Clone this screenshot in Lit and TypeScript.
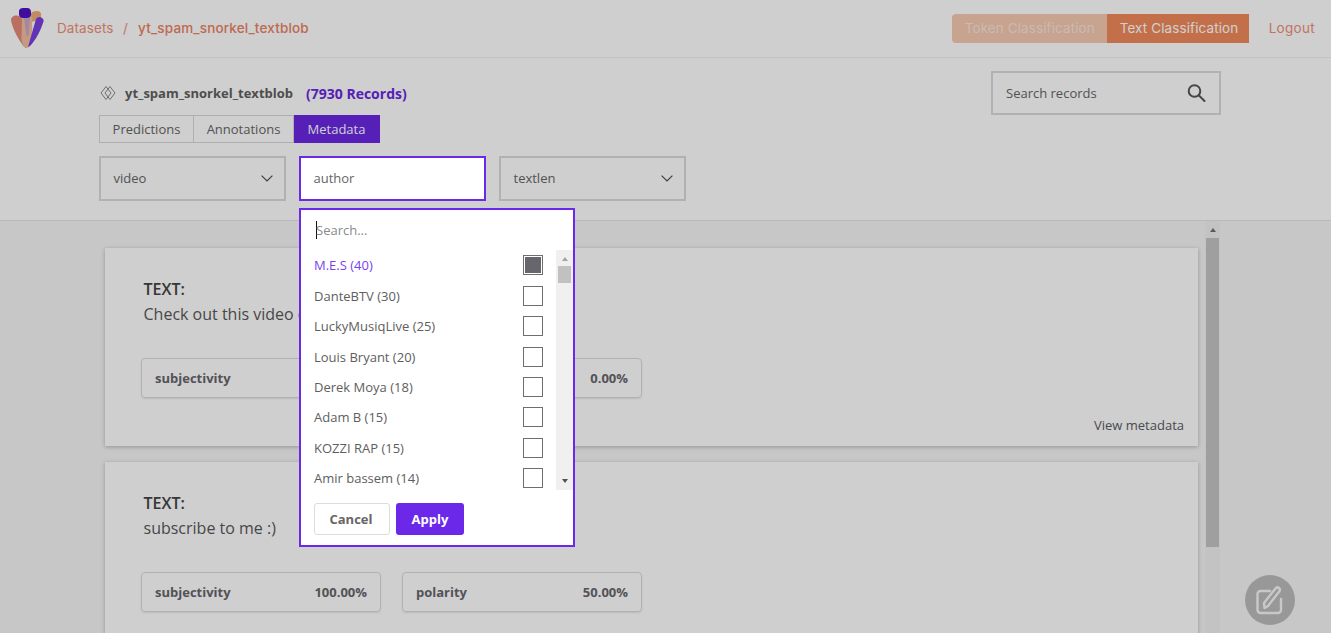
import { LitElement, html, css } from 'lit';
import { customElement } from 'lit/decorators.js';

const AUTHORS = [
	'M.E.S (40)',
	'DanteBTV (30)',
	'LuckyMusiqLive (25)',
	'Louis Bryant (20)',
	'Derek Moya (18)',
	'Adam B (15)',
	'KOZZI RAP (15)',
	'Amir bassem (14)',
];

const chevron = html`<svg class="chevron" width="12" height="7" viewBox="0 0 12 7" fill="none" stroke="#4d4d4d" stroke-width="1.2"><path d="M.6.6L6 6l5.400-5.400"/></svg>`;

@customElement('app-root')
export class AppRoot extends LitElement {
	static styles = css`
		* {
			box-sizing: border-box;
		}

		:host {
			display: block;
			position: relative;
			height: 633px;
			overflow: hidden;
			background: #fff;
			color: #666;
			font-family: "Open Sans", sans-serif;
			font-size: 13px;
		}

		.scrim {
			position: absolute;
			inset: 0;
			z-index: 10;
			background: rgba(0, 0, 0, 0.19);
		}

		.topbar {
			display: flex;
			align-items: center;
			height: 58px;
			padding: 0 16px 1px 11px;
			border-bottom: 1px solid #f0f0f0;
			font-family: Inter, sans-serif;
			font-size: 13.5px;
			letter-spacing: 0.1px;
			color: #ee8f76;
		}

		.logo {
			display: block;
			margin-right: 13px;
		}

		.crumb-sep {
			margin: 0 10px 0 9.5px;
		}

		.crumb-current {
			font-weight: 500;
			letter-spacing: 0.15px;
			color: #ea8263;
		}

		.switch {
			display: flex;
			margin-left: auto;
			height: 29px;
		}

		.switch div {
			display: flex;
			align-items: center;
			padding: 0 13px;
			white-space: nowrap;
			color: #fff;
		}

		.switch .token {
			width: 155px;
			background: #f5c9b2;
			border-radius: 4px 0 0 4px;
			color: #f8e6dc;
		}

		.switch .text {
			width: 142px;
			background: #f18b5c;
		}

		.logout {
			margin-left: 20px;
			letter-spacing: 0.3px;
		}

		.sub {
			display: flex;
			justify-content: space-between;
			align-items: flex-start;
			height: 163px;
			padding: 13px 110px 0 99px;
			border-bottom: 1px solid #e4e4e4;
		}

		.title {
			display: flex;
			align-items: center;
			height: 18px;
			margin-top: 13px;
			font-weight: 700;
			color: #606060;
		}

		.title svg {
			margin: 0 9px 0 1px;
		}

		.count {
			margin-left: 13px;
			font-size: 14px;
			color: #6a28e3;
		}

		.tabs {
			display: flex;
			height: 28px;
			margin-top: 13px;
		}

		.tabs div {
			display: flex;
			align-items: center;
			justify-content: center;
			border: 1px solid #d8d8d8;
			border-left: 0;
		}

		.tabs div:first-child {
			width: 95px;
			border-left: 1px solid #d8d8d8;
		}

		.tabs div:nth-child(2) {
			width: 100px;
		}

		.tabs .on {
			width: 86px;
			background: #6a28e3;
			border-color: #6a28e3;
			color: #fff;
		}

		.filters {
			display: flex;
			gap: 13px;
			margin-top: 13px;
		}

		.filter {
			position: relative;
		}

		.select {
			display: flex;
			align-items: center;
			justify-content: space-between;
			width: 187px;
			height: 45px;
			padding: 0 11px 1px 12.5px;
			border: 2px solid #dadada;
			background: #fff;
		}

		.select.open {
			position: relative;
			z-index: 20;
			border-color: #6b28e8;
		}

		.search {
			display: flex;
			align-items: center;
			justify-content: space-between;
			width: 230px;
			height: 44px;
			padding: 0 13px;
			border: 2px solid #dadada;
		}

		.dropdown {
			position: absolute;
			top: 52px;
			left: 0;
			z-index: 20;
			width: 276px;
			height: 339px;
			padding-left: 2px;
			border: 2px solid #6b28e8;
			background: #fff;
		}

		.dd-search {
			display: flex;
			align-items: center;
			height: 40px;
			padding-left: 13px;
			color: #8a8a8a;
		}

		.caret {
			width: 1px;
			height: 18px;
			margin-right: -1px;
			background: #111;
		}

		.dd-body {
			display: flex;
			height: 240px;
		}

		.dd-rows {
			flex: 1;
			padding-top: 0.2px;
		}

		.dd-row {
			display: flex;
			align-items: center;
			justify-content: space-between;
			height: 30.42px;
			padding: 0 13px 0 11px;
			color: #5e5e5e;
		}

		.dd-row.on {
			color: #7a3ff0;
		}

		.box {
			width: 20px;
			height: 20px;
			border: 1px solid #6e6e6e;
			background: #fff;
		}

		.dd-row.on .box {
			background: #66666c;
			box-shadow: inset 0 0 0 1px #fff;
		}

		.dd-bar {
			display: flex;
			flex-direction: column;
			align-items: center;
			width: 17px;
			background: #f0f0f0;
		}

		.arrow {
			width: 0;
			height: 0;
			border-left: 3.5px solid transparent;
			border-right: 3.5px solid transparent;
		}

		.arrow.up {
			margin-top: 7px;
			border-bottom: 4px solid #a3a3a3;
		}

		.arrow.down {
			margin-top: auto;
			margin-bottom: 7px;
			border-top: 4px solid #505050;
		}

		.dd-thumb {
			width: 13px;
			height: 17px;
			margin-top: 5px;
			background: #c1c1c1;
		}

		.dd-actions {
			display: flex;
			gap: 6px;
			padding: 13px 11px 0;
		}

		.btn {
			display: flex;
			align-items: center;
			justify-content: center;
			height: 32px;
			border-radius: 3px;
			font-weight: 700;
		}

		.btn.cancel {
			width: 76px;
			padding-right: 2px;
			border: 1px solid #dcdcdc;
			color: #666;
		}

		.btn.apply {
			width: 68px;
			background: #6b28e8;
			color: #fff;
		}

		.main {
			display: flex;
			height: 412px;
			background: #f5f5f5;
			overflow: hidden;
		}

		.records {
			width: 1205px;
			padding: 27px 7px 0 104.5px;
		}

		.card {
			height: 198px;
			margin-bottom: 16px;
			padding: 29px 14px 0 39px;
			background: #fff;
			box-shadow: 0 1px 4px rgba(0, 0, 0, 0.25);
		}

		.card h3 {
			margin: 0;
			font-size: 16px;
			font-weight: 600;
			line-height: 25px;
			color: #444;
		}

		.card p {
			margin: 0;
			font-size: 16px;
			line-height: 25px;
			color: #585858;
		}

		.chips {
			display: flex;
			gap: 21px;
			margin: 31px 0 0 -2.5px;
		}

		.chip {
			display: flex;
			align-items: center;
			justify-content: space-between;
			width: 240px;
			height: 40px;
			padding: 0 13px;
			border: 1px solid #dcdcdc;
			border-radius: 4px;
			font-weight: 700;
			color: #66666c;
			box-shadow: 0 1px 2px rgba(0, 0, 0, 0.1);
		}

		.view {
			margin-top: 17px;
			line-height: 20px;
			text-align: right;
			color: #5a5a64;
		}

		.scrollbar {
			display: flex;
			flex-direction: column;
			align-items: center;
			width: 15px;
			background: #f1f1f1;
		}

		.scrollbar .arrow.up {
			margin-top: 7px;
			border-bottom-color: #707070;
		}

		.thumb {
			width: 13px;
			height: 309px;
			margin-top: 6px;
			background: #c4c4c4;
		}

		.fab {
			position: absolute;
			left: 1245px;
			top: 575px;
			display: flex;
			align-items: center;
			justify-content: center;
			width: 50px;
			height: 50px;
			border-radius: 50%;
			background: #bcbcbc;
		}
	`;

	private record(text: string, subjectivity: string, polarity: string) {
		return html`
			<div class="card">
				<h3>TEXT:</h3>
				<p>${text}</p>
				<div class="chips">
					<div class="chip"><span>subjectivity</span><span>${subjectivity}</span></div>
					<div class="chip"><span>polarity</span><span>${polarity}</span></div>
				</div>
				<div class="view">View metadata</div>
			</div>
		`;
	}

	render() {
		return html`
			<header class="topbar">
				<svg class="logo" width="33" height="40" viewBox="0 0 33 40">
					<path d="M0 12C0 9 3 7 6 7.500 9 8 10 9 11 11L16 40C14 40 12 38 11 36 6 29 1 19 0 12z" fill="#e68a78"/>
					<path d="M20 5C22 3 27 2 29 4 31 6 30 9 29 12L20 14z" fill="#f0ac78"/>
					<path d="M11 9H21L21.500 30C21 36 18 40 15.500 40 13 40 11 36 10.500 30z" fill="#f2bfa0"/>
					<path d="M17 39L25 11C26 9 29 8 31 10 33 11 33 13 32 15 29 24 24 33 19 38z" fill="#7b3fe0"/>
					<path d="M13 10H19L17.500 28H15.500z" fill="#c8a8c8"/>
					<path d="M8 3C8 1 10 0 12 0H16C19 0 20 2 20 4V7C20 9 18 10 16 10H12C9 10 8 8 8 6z" fill="#4f12c4"/>
				</svg>
				<span>Datasets</span>
				<span class="crumb-sep">/</span>
				<span class="crumb-current">yt_spam_snorkel_textblob</span>
				<div class="switch">
					<div class="token">Token Classification</div>
					<div class="text">Text Classification</div>
				</div>
				<span class="logout">Logout</span>
			</header>

			<section class="sub">
				<div>
					<div class="title">
						<svg width="16" height="16" viewBox="0 0 16 16" fill="none" stroke="#8a8a8a" stroke-width="1">
							<path d="M6 1.500L1 8l5 6.500L11 8z"/>
							<path d="M10 1.500L5 8l5 6.500L15 8z"/>
						</svg>
						<span>yt_spam_snorkel_textblob</span>
						<span class="count">(7930 Records)</span>
					</div>
					<div class="tabs">
						<div>Predictions</div>
						<div>Annotations</div>
						<div class="on">Metadata</div>
					</div>
					<div class="filters">
						<div class="filter"><div class="select">video ${chevron}</div></div>
						<div class="filter">
							<div class="select open">author</div>
							<div class="dropdown">
								<div class="dd-search"><span class="caret"></span>Search...</div>
								<div class="dd-body">
									<div class="dd-rows">
										${AUTHORS.map(
											(name, i) => html`
												<div class="dd-row ${i === 0 ? 'on' : ''}">
													<span>${name}</span><span class="box"></span>
												</div>
											`
										)}
									</div>
									<div class="dd-bar">
										<span class="arrow up"></span>
										<span class="dd-thumb"></span>
										<span class="arrow down"></span>
									</div>
								</div>
								<div class="dd-actions">
									<div class="btn cancel">Cancel</div>
									<div class="btn apply">Apply</div>
								</div>
							</div>
						</div>
						<div class="filter"><div class="select">textlen ${chevron}</div></div>
					</div>
				</div>
				<div class="search">
					<span>Search records</span>
					<svg width="19" height="18" viewBox="0 0 19 18" fill="none" stroke="#555" stroke-width="2">
						<circle cx="7.500" cy="7" r="5.800"/>
						<path d="M12 11.500l5.500 5.500" stroke-linecap="round"/>
					</svg>
				</div>
			</section>

			<main class="main">
				<div class="records">
					${this.record('Check out this video on YouTube', '0.00%', '0.00%')}
					${this.record('subscribe to me :)', '100.00%', '50.00%')}
				</div>
				<div class="scrollbar">
					<span class="arrow up"></span>
					<span class="thumb"></span>
				</div>
			</main>

			<div class="fab">
				<svg width="30" height="32" viewBox="0 0 30 32" fill="none" stroke="#f7f7f7" stroke-width="2.400" stroke-linecap="round" stroke-linejoin="round">
					<path d="M15 7H5.500A3 3 0 0 0 2.500 10V26A3 3 0 0 0 5.500 29H23A3 3 0 0 0 26 26V15"/>
					<path d="M9.500 24L9 19 20.500 4.500C21.500 3.300 23 3.200 24 4 25 4.800 25.200 6.200 24.200 7.500L13 22z"/>
				</svg>
			</div>

			<div class="scrim"></div>
		`;
	}
}
